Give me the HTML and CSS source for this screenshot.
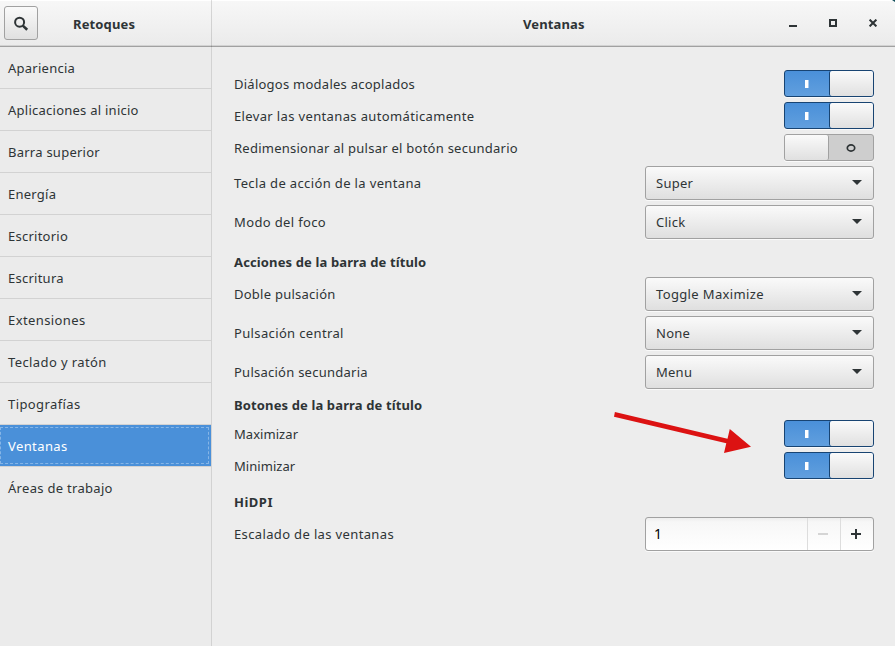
FILE: index.html
```html
<!DOCTYPE html>
<html lang="es">
<head>
<meta charset="utf-8">
<title>Retoques</title>
<link rel="stylesheet" href="styles.css">
</head>
<body>
<div class="window">
  <header class="titlebar">
    <div class="title-left">
      <button class="search" aria-label="Buscar"><svg width="16" height="16" viewBox="0 0 16 16"><circle cx="6.6" cy="6.2" r="4.5" fill="none" stroke="#2e3436" stroke-width="2"/><path d="M9.8 9.6L14.2 13.8" stroke="#2e3436" stroke-width="2.6"/></svg></button>
      <span class="app-name">Retoques</span>
    </div>
    <div class="title-right">
      <span class="page-name">Ventanas</span>
      <div class="controls">
        <svg width="8" height="8"><path d="M0 6h8v2H0z" fill="#2e3436"/></svg>
        <svg width="8" height="8"><path d="M1 1h6v6H1z" fill="none" stroke="#2e3436" stroke-width="2"/></svg>
        <svg width="8" height="8"><path d="M.6 .6L7.4 7.4M7.4 .6L.6 7.4" stroke="#2e3436" stroke-width="2"/></svg>
      </div>
    </div>
  </header>
  <div class="body">
    <nav class="sidebar">
      <a class="item">Apariencia</a>
      <a class="item">Aplicaciones al inicio</a>
      <a class="item">Barra superior</a>
      <a class="item">Energía</a>
      <a class="item">Escritorio</a>
      <a class="item">Escritura</a>
      <a class="item">Extensiones</a>
      <a class="item">Teclado y ratón</a>
      <a class="item">Tipografías</a>
      <a class="item selected">Ventanas</a>
      <a class="item last">Áreas de trabajo</a>
    </nav>
    <main class="content">
      <div class="row"><label>Diálogos modales acoplados</label><div class="switch on"><i></i><b></b></div></div>
      <div class="row"><label class="wide">Elevar las ventanas automáticamente</label><div class="switch on"><i></i><b></b></div></div>
      <div class="row"><label>Redimensionar al pulsar el botón secundario</label><div class="switch off"><b></b><i><svg width="10" height="8"><ellipse cx="5" cy="4" rx="3.7" ry="3.1" fill="none" stroke="#2e3436" stroke-width="1.7"/></svg></i></div></div>
      <div class="row"><label class="wide">Tecla de acción de la ventana</label><div class="combo"><span>Super</span><i class="caret"></i></div></div>
      <div class="row"><label class="wide">Modo del foco</label><div class="combo"><span>Click</span><i class="caret"></i></div></div>
      <h2 class="spaced">Acciones de la barra de título</h2>
      <div class="row"><label>Doble pulsación</label><div class="combo"><span class="wide">Toggle Maximize</span><i class="caret"></i></div></div>
      <div class="row"><label class="wide">Pulsación central</label><div class="combo"><span>None</span><i class="caret"></i></div></div>
      <div class="row"><label>Pulsación secundaria</label><div class="combo"><span>Menu</span><i class="caret"></i></div></div>
      <h2 class="tight">Botones de la barra de título</h2>
      <div class="row"><label class="narrow">Maximizar</label><div class="switch on"><i></i><b></b></div></div>
      <div class="row"><label class="narrow">Minimizar</label><div class="switch on"><i></i><b></b></div></div>
      <h2 class="spaced hidpi">HiDPI</h2>
      <div class="row"><label class="wide">Escalado de las ventanas</label>
        <div class="spin"><span class="value">1</span><span class="step"><svg width="10" height="10"><path d="M0 4h10v2H0z" fill="#d5d5d5"/></svg></span><span class="step"><svg width="10" height="10"><path d="M0 4h4V0h2v4h4v2H6v4H4V6H0z" fill="#2e3436"/></svg></span></div>
      </div>
    </main>
  </div>
  <svg class="arrow" width="138" height="42" viewBox="613 411 138 42"><path d="M614.9 411.9L727.5 438.8L729.8 429L751 446.8L724 453L726.3 443.3L614 416.7z" fill="#dc1212"/></svg>
</div>
</body>
</html>
```
FILE: styles.css
```css
* { box-sizing: border-box; }
body { margin: 0; background: #ededed; font: 13px/20px "Noto Sans", "Open Sans", sans-serif; letter-spacing: .25px; color: #2e3436; }
.window { position: relative; width: 895px; height: 646px; overflow: hidden; display: flex; flex-direction: column; }
.window::after { content: ""; position: absolute; top: 0; right: 0; border-top: 2px solid #12505c; border-left: 3px solid transparent; }
.titlebar { display: flex; height: 47px; background: linear-gradient(#fff 0 1px, #f7f7f7 1px, #ebebeb 45px, #d2d2d2 45px 46px, #a1a1a1 46px); }
.title-left { width: 212px; border-right: 1px solid rgba(0,0,0,.13); display: flex; align-items: flex-start; padding: 6px 0 0 4px; }
.search { width: 34px; height: 34px; padding: 1px 0 0; border: 1px solid #a1a1a1; border-radius: 3px; background: linear-gradient(#fafafa, #e0e0e0); display: flex; align-items: center; justify-content: center; }
.app-name { margin: 8px 0 0 35px; font-weight: 700; letter-spacing: .13px; }
.title-right { flex: 1; display: flex; padding-top: 14px; }
.page-name { margin-left: 311px; width: 266px; font-weight: 700; letter-spacing: .13px; }
.controls { display: flex; gap: 32px; padding-top: 5px; }
.controls svg { display: block; }
.body { flex: 1; display: flex; }
.sidebar { width: 212px; border-right: 1px solid #d2d2d2; background: #ebebeb; }
.item { display: block; height: 42px; padding: 11px 8px; border-bottom: 1px solid #d2d2d2; white-space: nowrap; }
.item:nth-child(n+7) { letter-spacing: .4px; }
.item.last { border-bottom: 0; letter-spacing: .3px; }
.item.selected { color: #fff; background: #4a90d9 content-box; background-clip: padding-box; position: relative; }
.item.selected::after { content: ""; position: absolute; inset: 2px; left: 0; border: 1px dashed #86b5e6; }
.content { flex: 1; padding: 23px 21px 0 22px; display: flex; flex-direction: column; gap: 5px; }
.row { display: flex; justify-content: space-between; align-items: center; }
label { white-space: nowrap; }
.wide { letter-spacing: .36px; }
.narrow { letter-spacing: .05px; }
h2 { margin: 0; font-size: 13px; line-height: 20px; font-weight: 700; letter-spacing: .13px; }
.spaced { padding-top: 8px; }
.hidpi { letter-spacing: .5px; }
.tight { height: 21px; padding-top: 1px; }
.switch { width: 90px; height: 27px; border: 1px solid #184472; border-radius: 3px; display: flex; background: linear-gradient(#4a90d9, #619fde); box-shadow: 0 1px #fafafa; }
.switch i { flex: 1; display: flex; align-items: center; justify-content: center; }
.switch.on i::before { content: ""; width: 3px; height: 8px; margin-right: 1px; background: #fff; border: solid #a6c9ee; border-width: 0 1px 0 0; }
.switch b { width: 43px; height: 25px; border-radius: 2px; background: linear-gradient(#fafafa, #e0e0e0); box-shadow: -1px 0 #184472; }
.switch.off { border-color: #a1a1a1; background: #cecece; }
.switch.off b { box-shadow: 1px 0 #a1a1a1; }
.switch.off svg { display: block; margin-top: 1px; }
.combo { width: 229px; height: 34px; padding: 0 11px 0 10px; border: 1px solid #a1a1a1; border-radius: 3px; display: flex; align-items: center; justify-content: space-between; background: linear-gradient(#fafafa, #dfdfdf); box-shadow: 0 1px #fafafa; }
.caret { border: 5px solid transparent; border-top-color: #2e3436; border-bottom: 0; margin-bottom: 2px; }
.spin { width: 229px; height: 34px; border: 1px solid #a1a1a1; border-radius: 3px; display: flex; background: linear-gradient(#eee, #f7f7f7 4px, #fff); box-shadow: 0 1px #fafafa; }
.value { flex: 1; padding: 6px 8px; color: #000; font-size: 14px; }
.step { width: 33px; padding-right: 2px; border-left: 1px solid #ddd; display: flex; align-items: center; justify-content: center; }
.arrow { position: absolute; left: 613px; top: 411px; }
```
